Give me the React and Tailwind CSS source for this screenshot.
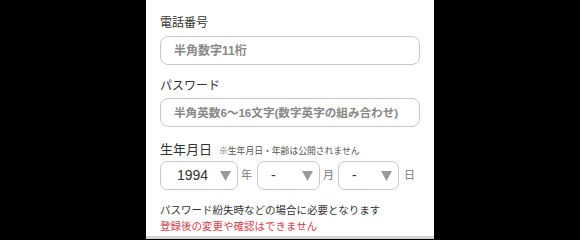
import React from "react";

function Arrow() {
  return (
    <svg width="11" height="10" viewBox="0 0 11 10" className="shrink-0">
      <path d="M0 0 L11 0 L5.5 10 Z" fill="#9a9a9a" />
    </svg>
  );
}

function DateSelect({ value, width, textPad }) {
  return (
    <div
      className={`flex items-center justify-between h-[29px] border border-[#c8c8c8] rounded-[7px] pr-[6px] ${width} ${textPad}`}
    >
      <span className="text-[14px] text-[#333] font-['Liberation_Sans',sans-serif]">{value}</span>
      <Arrow />
    </div>
  );
}

export default function App() {
  return (
    <div className="min-h-screen bg-black flex justify-center font-['Liberation_Sans','Noto_Sans_CJK_JP',sans-serif]">
      <div className="w-[288px] h-[239px] bg-white border-b-[3px] border-[#d4d4d4] px-[14px] pt-[15px]">
        {/* Phone */}
        <p className="text-[12px] leading-[16px] text-[#333]">電話番号</p>
        <div className="mt-[5px] h-[29px] border border-[#c8c8c8] rounded-[8px] flex items-center px-[13px]">
          <span className="text-[12px] font-bold text-[#888]">半角数字11桁</span>
        </div>

        {/* Password */}
        <p className="mt-[13px] text-[12px] leading-[16px] text-[#333]">パスワード</p>
        <div className="mt-[4px] h-[29px] border border-[#c8c8c8] rounded-[8px] flex items-center px-[13px]">
          <span className="text-[11.6px] font-bold text-[#888] whitespace-nowrap">半角英数6〜16文字(数字英字の組み合わせ)</span>
        </div>

        {/* Birthday */}
        <div className="mt-[14px] flex items-end gap-[7px]">
          <span className="text-[13px] leading-[17px] text-[#333]">生年月日</span>
          <span className="text-[8.8px] leading-[14px] text-[#555]">※生年月日・年齢は公開されません</span>
        </div>
        <div className="mt-[3px] flex items-center">
          <DateSelect value="1994" width="w-[78px]" textPad="pl-[16px]" />
          <span className="ml-[3px] mr-[5px] text-[11px] text-[#777]">年</span>
          <DateSelect value="-" width="w-[63px]" textPad="pl-[13px]" />
          <span className="ml-[3px] mr-[4px] text-[11px] text-[#777]">月</span>
          <DateSelect value="-" width="w-[61px]" textPad="pl-[13px]" />
          <span className="ml-[5px] text-[11px] text-[#777]">日</span>
        </div>

        {/* Notes */}
        <p className="mt-[12px] text-[10.5px] leading-[16px] text-[#333]">パスワード紛失時などの場合に必要となります</p>
        <p className="text-[10.5px] leading-[16px] text-[#d9434f]">登録後の変更や確認はできません</p>
      </div>
    </div>
  );
}
